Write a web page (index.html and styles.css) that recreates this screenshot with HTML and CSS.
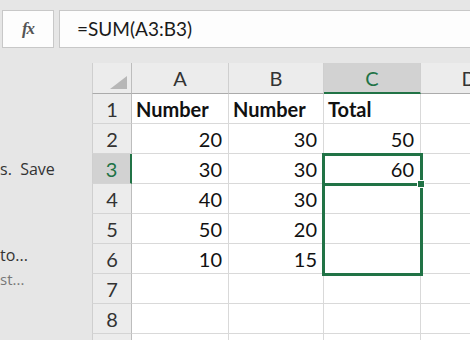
FILE: index.html
```html
<!DOCTYPE html>
<html lang="en">
<head>
  <meta charset="UTF-8">
  <title>Sheet</title>
  <link rel="stylesheet" href="styles.css">
</head>
<body>
  <!-- Formula bar -->
  <div class="formula-bar">
    <div class="fx-box"><span class="fx">fx</span></div>
    <div class="formula-input">=SUM(A3:B3)</div>
  </div>

  <div class="workspace">
    <!-- Side panel (cut off) -->
    <div class="side-panel">
      <div class="side-line save">s.&nbsp; Save</div>
      <div class="side-line to">to...</div>
      <div class="side-line st">st...</div>
    </div>

    <!-- Grid -->
    <div class="sheet">
      <div class="corner"><span class="tri"></span></div>
      <div class="col-head">A</div>
      <div class="col-head">B</div>
      <div class="col-head active">C</div>
      <div class="col-head">D</div>

      <div class="row-head">1</div>
      <div class="cell bold">Number</div>
      <div class="cell bold">Number</div>
      <div class="cell bold">Total</div>
      <div class="cell"></div>

      <div class="row-head">2</div>
      <div class="cell num">20</div>
      <div class="cell num">30</div>
      <div class="cell num">50</div>
      <div class="cell"></div>

      <div class="row-head active">3</div>
      <div class="cell num">30</div>
      <div class="cell num">30</div>
      <div class="cell num">60</div>
      <div class="cell"></div>

      <div class="row-head">4</div>
      <div class="cell num">40</div>
      <div class="cell num">30</div>
      <div class="cell"></div>
      <div class="cell"></div>

      <div class="row-head">5</div>
      <div class="cell num">50</div>
      <div class="cell num">20</div>
      <div class="cell"></div>
      <div class="cell"></div>

      <div class="row-head">6</div>
      <div class="cell num">10</div>
      <div class="cell num">15</div>
      <div class="cell"></div>
      <div class="cell"></div>

      <div class="row-head">7</div>
      <div class="cell"></div>
      <div class="cell"></div>
      <div class="cell"></div>
      <div class="cell"></div>

      <div class="row-head">8</div>
      <div class="cell"></div>
      <div class="cell"></div>
      <div class="cell"></div>
      <div class="cell"></div>

      <div class="row-head"></div>
      <div class="cell"></div>
      <div class="cell"></div>
      <div class="cell"></div>
      <div class="cell"></div>

      <!-- Selection C3:C6 -->
      <div class="selection"></div>
      <div class="active-line"></div>
      <div class="fill-handle"></div>
    </div>
  </div>
</body>
</html>
```

FILE: styles.css
```css
html, body {
  margin: 0;
  padding: 0;
}
body {
  width: 470px;
  height: 340px;
  overflow: hidden;
  background-color: #e6e6e6;
  font-family: Lato, "Liberation Sans", sans-serif;
  color: #222;
}

/* Formula bar */
.formula-bar {
  display: flex;
  gap: 5px;
  padding: 10px 0 0 2px;
  height: 38px;
}
.fx-box {
  width: 52px;
  box-sizing: border-box;
  border: 1px solid #c8c8c8;
  background-color: #fdfdfd;
  display: flex;
  align-items: center;
  justify-content: center;
}
.fx {
  font-family: "Liberation Serif", serif;
  font-style: italic;
  font-weight: bold;
  font-size: 17px;
  color: #555;
  letter-spacing: -1px;
}
.formula-input {
  flex: 1;
  box-sizing: border-box;
  border: 1px solid #c8c8c8;
  border-right: none;
  background-color: #fdfdfd;
  padding-left: 17px;
  font-size: 19px;
  line-height: 36px;
  color: #1a1a1a;
}

/* Workspace */
.workspace {
  display: flex;
  margin-top: 15px;
}
.side-panel {
  width: 92px;
  flex-shrink: 0;
  font-family: "Open Sans", sans-serif;
  color: #333;
  font-size: 16px;
  white-space: nowrap;
  overflow: hidden;
}
.side-line.save {
  margin-top: 95px;
}
.side-line.to {
  margin-top: 64px;
}
.side-line.st {
  margin-top: 3px;
  font-size: 15px;
  color: #777;
}

/* Sheet grid */
.sheet {
  position: relative;
  display: grid;
  grid-template-columns: 40px 97px 95px 97px 97px;
  grid-template-rows: 31px repeat(9, 30px);
  background-color: #fff;
  font-size: 20px;
}
.corner, .col-head, .row-head {
  background-color: #ececec;
  color: #333;
  box-sizing: border-box;
}
.corner {
  border-left: 1px solid #cfcfcf;
  border-right: 1px solid #bdbdbd;
  border-bottom: 1px solid #ababab;
  position: relative;
}
.tri {
  position: absolute;
  right: 4px;
  bottom: 4px;
  width: 0;
  height: 0;
  border-left: 17px solid transparent;
  border-bottom: 13px solid #b7b7b7;
}
.col-head {
  display: flex;
  align-items: center;
  justify-content: center;
  border-right: 1px solid #cfcfcf;
  border-bottom: 1px solid #ababab;
  white-space: nowrap;
}
.col-head.active {
  background-color: #d2d2d2;
  color: #217346;
  border-bottom: 2px solid #217346;
}
.row-head {
  display: flex;
  align-items: center;
  justify-content: center;
  border-left: 1px solid #cfcfcf;
  border-right: 1px solid #bdbdbd;
  border-bottom: 1px solid #d4d4d4;
}
.row-head.active {
  background-color: #d2d2d2;
  color: #217346;
  border-right: 2px solid #217346;
}
.cell {
  box-sizing: border-box;
  border-right: 1px solid #d9d9d9;
  border-bottom: 1px solid #d9d9d9;
  display: flex;
  align-items: center;
  padding: 0 6px 0 4px;
  color: #111;
  white-space: nowrap;
  overflow: hidden;
}
.cell.num {
  justify-content: flex-end;
}
.cell.bold {
  font-weight: bold;
}

/* Selection overlay */
.selection {
  position: absolute;
  left: 230px;
  top: 90px;
  width: 101px;
  height: 123px;
  box-sizing: border-box;
  border: 3px solid #217346;
}
.active-line {
  position: absolute;
  left: 230px;
  top: 120px;
  width: 99px;
  height: 3px;
  background-color: #217346;
}
.fill-handle {
  position: absolute;
  left: 325px;
  top: 117px;
  width: 6px;
  height: 6px;
  background-color: #217346;
  border: 1px solid #fff;
}
```
